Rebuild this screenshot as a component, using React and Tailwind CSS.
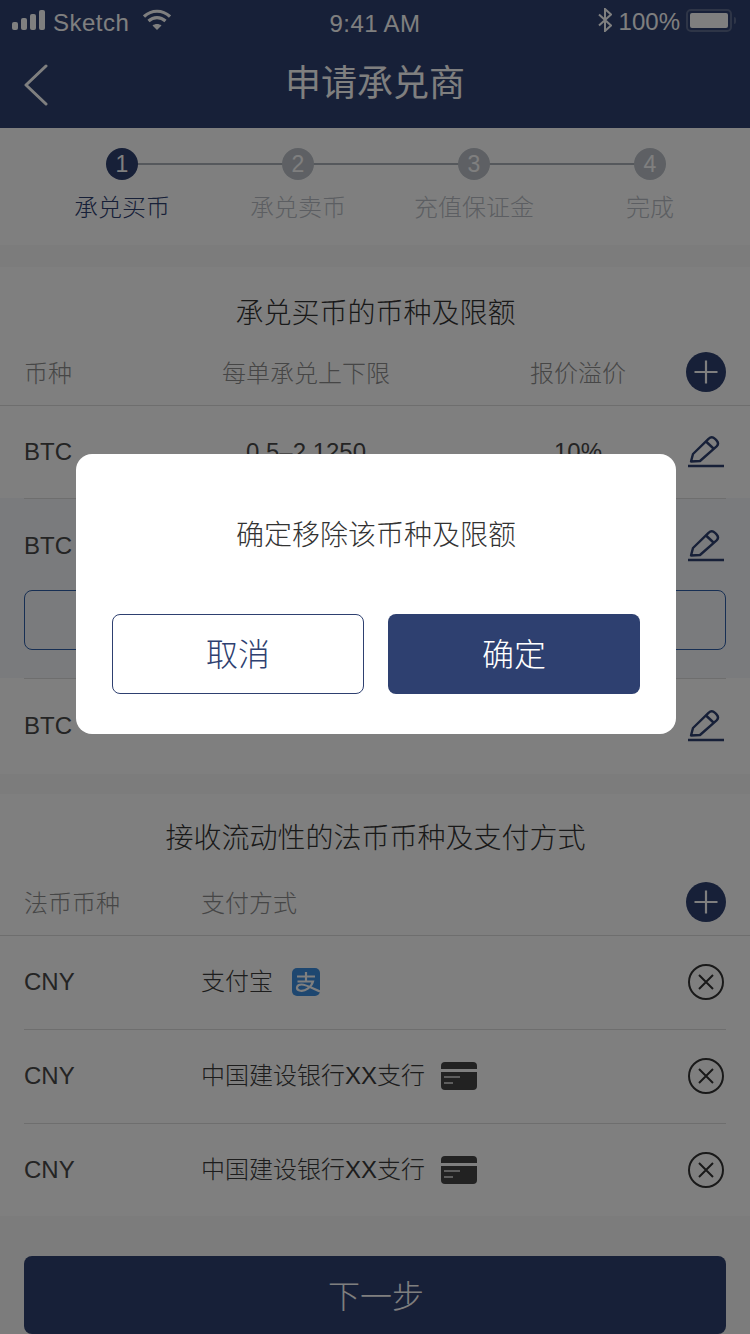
import React from "react";

const FONT = { fontFamily: '"Liberation Sans", "Noto Sans CJK SC", sans-serif' };

function Signal() {
  return (
    <svg width="34" height="20" viewBox="0 0 34 20" fill="#fff">
      <rect x="0" y="12" width="6" height="8" rx="2" />
      <rect x="9" y="8" width="6" height="12" rx="2" />
      <rect x="18" y="4" width="6" height="16" rx="2" />
      <rect x="27" y="0" width="6" height="20" rx="2" />
    </svg>
  );
}

function Wifi() {
  return (
    <svg width="28" height="22" viewBox="0 0 28 22" fill="none" stroke="#fff" strokeWidth="3.2">
      <path d="M1 7.5C8.5 .5 19.5 .5 27 7.5" />
      <path d="M5.5 12C10.5 7.5 17.5 7.5 22.5 12" />
      <path d="M14 21l-4.5-4.6c2.5-2 6.5-2 9 0z" fill="#fff" stroke="none" />
    </svg>
  );
}

function Bluetooth() {
  return (
    <svg width="14" height="24" viewBox="0 0 14 24" fill="none" stroke="#fff" strokeWidth="2">
      <path d="M1 6.5L13 17.5L7 23V1L13 6.5L1 17.5" />
    </svg>
  );
}

function Battery() {
  return (
    <div className="flex items-center gap-[2px]">
      <div className="w-[46px] h-[23px] border-2 border-[#5c6a8e] rounded-[5px] p-[2px]">
        <div className="w-full h-full bg-white rounded-[2px]" />
      </div>
      <div className="w-[2px] h-[7px] bg-[#5c6a8e] rounded-r-full" />
    </div>
  );
}

function Plus() {
  return (
    <svg width="40" height="40" viewBox="0 0 40 40">
      <circle cx="20" cy="20" r="20" fill="#2e4070" />
      <path d="M20 8.5v23M8.5 20h23" stroke="#fff" strokeWidth="2.2" />
    </svg>
  );
}

function Pencil() {
  return (
    <svg width="36" height="32" viewBox="0 0 36 32" fill="none" stroke="#2e4070" strokeWidth="2.4" strokeLinejoin="round">
      <path d="M3 25.5L5 18L20.5 2.8C22.5 1 25 1 27 2.8L28.5 4.4C30.4 6.4 30.4 8.6 28.6 10.4L12 25z" />
      <path d="M18 5.5L26 13" />
      <path d="M0 30H36" strokeWidth="2.6" />
    </svg>
  );
}

function CloseCircle() {
  return (
    <svg width="36" height="36" viewBox="0 0 36 36" fill="none" stroke="#333" strokeWidth="2">
      <circle cx="18" cy="18" r="17" />
      <path d="M11 11L25 25M25 11L11 25" />
    </svg>
  );
}

function Alipay() {
  return (
    <svg width="28" height="28" viewBox="0 0 28 28">
      <rect width="28" height="28" rx="5" fill="#3d8ee0" />
      <g fill="none" stroke="#fff" strokeWidth="2.2">
        <path d="M5 8.5H23M14 4v10M5.5 13.5H21C19.5 19 13 24 7.5 22.5C3.5 21.2 4.5 16.5 9.5 16.5C14 16.5 20 20 28 23.5" />
      </g>
    </svg>
  );
}

function Card() {
  return (
    <svg width="36" height="28" viewBox="0 0 36 28">
      <path d="M0 7V4a4 4 0 0 1 4-4h28a4 4 0 0 1 4 4v3z" fill="#444" />
      <path d="M0 10h36v14a4 4 0 0 1-4 4H4a4 4 0 0 1-4-4z" fill="#444" />
      <path d="M3 15h16M3 21h9" stroke="#bbb" strokeWidth="2" />
    </svg>
  );
}

function Step({ n, label, active, last }) {
  return (
    <div className="relative flex flex-col items-center">
      {!last && <div className="absolute left-1/2 top-[15px] w-full h-[2px] bg-[#aab0b8]" />}
      <div
        className={`relative w-[32px] h-[32px] rounded-full flex items-center justify-center text-[23px] text-white ${
          active ? "bg-[#2e4070]" : "bg-[#bcc1c8]"
        }`}
      >
        {n}
      </div>
      <div className={`mt-[11px] text-[24px] leading-[34px] font-light ${active ? "text-[#2e4070]" : "text-[#b8bdc4]"}`}>
        {label}
      </div>
    </div>
  );
}

function QuotaCells({ a, b, c, icon }) {
  return (
    <>
      <div className="w-[182px] shrink-0">{a}</div>
      <div className="w-[200px] shrink-0 text-center whitespace-nowrap">{b}</div>
      <div className="ml-[100px] w-[144px] shrink-0 text-center whitespace-nowrap">{c}</div>
      <div className="flex-1 flex justify-end">{icon}</div>
    </>
  );
}

function QuotaRow({ hidden, short }) {
  return (
    <div className={`flex items-center px-[24px] text-[24px] font-light text-[#484848] ${short ? "h-[92px]" : "h-[93px]"}`}>
      <QuotaCells
        a="BTC"
        b={hidden ? "" : "0.5–2.1250"}
        c={hidden ? "" : "10%"}
        icon={<span className="mr-[2px]"><Pencil /></span>}
      />
    </div>
  );
}

function PayRow({ method, icon, gap, border }) {
  return (
    <div className={`h-[94px] pb-[2px] flex items-center text-[24px] font-light text-[#484848] mx-[24px] ${border ? "border-b border-[#ddd]" : ""}`}>
      <div className="w-[177px] shrink-0">CNY</div>
      <div className="whitespace-nowrap text-[#3a3a3a]">{method}</div>
      <div className={`flex items-center ${gap}`}>{icon}</div>
      <div className="flex-1 flex justify-end">
        <span className="mr-[2px]"><CloseCircle /></span>
      </div>
    </div>
  );
}

export default function App() {
  return (
    <div className="relative w-[750px] h-[1334px] overflow-hidden bg-[#f8f8f8]" style={FONT}>
      {/* Header */}
      <div className="bg-[#2e4070] h-[128px] text-white">
        <div className="relative h-[40px] flex items-center justify-between pl-[12px] pr-[14px] text-[24px] font-light">
          <div className="flex items-center">
            <Signal />
            <span className="ml-[7px] mt-[5px] tracking-[0.5px]">Sketch</span>
            <span className="ml-[14px]"><Wifi /></span>
          </div>
          <div className="absolute left-0 right-0 top-[4px] text-center leading-[40px] tracking-[0.4px]">9:41 AM</div>
          <div className="flex items-center">
            <Bluetooth />
            <span className="ml-[7px] mt-[4px]">100%</span>
            <span className="ml-[6px]"><Battery /></span>
          </div>
        </div>
        <div className="relative h-[88px] flex items-center justify-center">
          <svg className="absolute left-[24px] top-[24px]" width="24" height="42" viewBox="0 0 24 42" fill="none" stroke="#fff" strokeWidth="3" strokeLinecap="round" strokeLinejoin="round">
            <path d="M22 2L2 21L22 40" />
          </svg>
          <span className="text-[36px] font-normal">申请承兑商</span>
        </div>
      </div>

      {/* Steps */}
      <div className="bg-white h-[117px] pt-[20px] pl-[34px] pr-[12px] grid grid-cols-4">
        <Step n="1" label="承兑买币" active />
        <Step n="2" label="承兑卖币" />
        <Step n="3" label="充值保证金" />
        <Step n="4" label="完成" last />
      </div>

      {/* Section 1 */}
      <div className="mt-[22px] bg-white h-[507px]">
        <div className="h-[76px] pt-[29px] pl-[1px] text-center text-[28px] leading-[36px] font-light text-[#333]">
          承兑买币的币种及限额
        </div>
        <div className="h-[63px] flex items-center px-[24px] text-[24px] font-light text-[#8c8c8c] border-b border-[#ddd]">
          <QuotaCells a="币种" b="每单承兑上下限" c="报价溢价" icon={<span className="mt-[-4px]"><Plus /></span>} />
        </div>
        <QuotaRow short />
        <div className="bg-[#f5f6fa] h-[180px]">
          <div className="mx-[24px] border-t border-[#ddd]" />
          <QuotaRow hidden />
          <div className="mx-[24px] h-[60px] mt-[-2px] border border-[#2e5fa8] rounded-[8px]" />
        </div>
        <div className="mx-[24px] border-t border-[#ddd]" />
        <QuotaRow />
      </div>

      {/* Section 2 */}
      <div className="mt-[20px] bg-white h-[422px]">
        <div className="h-[76px] pt-[27px] pl-[1px] text-center text-[28px] leading-[36px] font-light text-[#333]">
          接收流动性的法币币种及支付方式
        </div>
        <div className="h-[66px] pt-[2px] flex items-center px-[24px] text-[24px] font-light text-[#8c8c8c] border-b border-[#ddd]">
          <div className="w-[177px] shrink-0">法币币种</div>
          <div>支付方式</div>
          <div className="flex-1 flex justify-end"><span className="mt-[-3px]"><Plus /></span></div>
        </div>
        <PayRow method="支付宝" icon={<Alipay />} gap="ml-[19px]" border />
        <PayRow method="中国建设银行XX支行" icon={<Card />} gap="ml-[16px]" border />
        <PayRow method="中国建设银行XX支行" icon={<Card />} gap="ml-[16px]" />
      </div>

      {/* Next button */}
      <div className="mt-[40px] mx-[24px] h-[78px] pt-[4px] pl-[2px] bg-[#2e4070] rounded-[8px] flex items-center justify-center text-white text-[32px] font-light">
        下一步
      </div>

      {/* Dim layer and dialog */}
      <div className="absolute inset-0 bg-black/50" />
      <div className="absolute left-[76px] top-[454px] w-[600px] h-[280px] bg-white rounded-[16px] px-[36px] pt-[62px]">
        <div className="text-center text-[28px] leading-[40px] font-light text-[#333]">确定移除该币种及限额</div>
        <div className="mt-[58px] flex gap-[24px]">
          <div className="w-[252px] h-[80px] pt-[2px] rounded-[8px] border border-[#2e4070] flex items-center justify-center text-[32px] font-light text-[#2e4070]">
            取消
          </div>
          <div className="w-[252px] h-[80px] pt-[2px] rounded-[8px] bg-[#2e4070] flex items-center justify-center text-[32px] font-light text-white">
            确定
          </div>
        </div>
      </div>
    </div>
  );
}
